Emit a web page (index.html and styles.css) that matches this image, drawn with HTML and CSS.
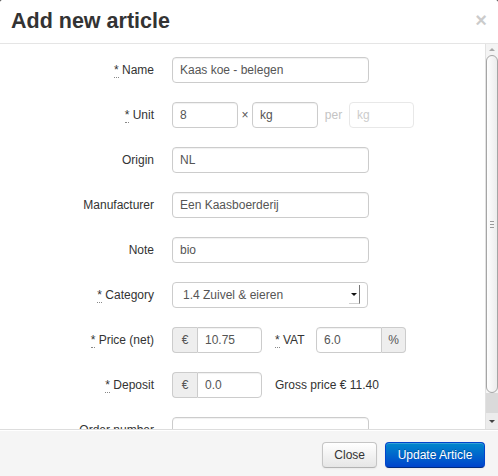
FILE: index.html
```html
<!DOCTYPE html>
<html lang="en">
<head>
<meta charset="utf-8">
<title>Add new article</title>
<link rel="stylesheet" href="styles.css">
</head>
<body>
<div class="modal">
  <div class="modal-header">
    <h3 class="title">Add new article</h3>
    <span class="close">×</span>
  </div>
  <div class="modal-body">
    <div class="form">
      <div class="row">
        <label class="lbl"><abbr title="required">*</abbr> Name</label>
        <div class="controls"><input class="input w-full" value="Kaas koe - belegen"></div>
      </div>
      <div class="row">
        <label class="lbl"><abbr title="required">*</abbr> Unit</label>
        <div class="controls">
          <input class="input w-66" value="8">
          <span class="times">×</span>
          <input class="input w-66" value="kg">
          <span class="per">per</span>
          <input class="input w-65 muted" placeholder="kg">
        </div>
      </div>
      <div class="row">
        <label class="lbl">Origin</label>
        <div class="controls"><input class="input w-full" value="NL"></div>
      </div>
      <div class="row">
        <label class="lbl">Manufacturer</label>
        <div class="controls"><input class="input w-full" value="Een Kaasboerderij"></div>
      </div>
      <div class="row">
        <label class="lbl">Note</label>
        <div class="controls"><input class="input w-full" value="bio"></div>
      </div>
      <div class="row">
        <label class="lbl"><abbr title="required">*</abbr> Category</label>
        <div class="controls">
          <div class="select"><span class="select-text">1.4 Zuivel &amp; eieren</span><span class="select-arrow"><span class="tri"></span></span></div>
        </div>
      </div>
      <div class="row">
        <label class="lbl"><abbr title="required">*</abbr> Price (net)</label>
        <div class="controls">
          <span class="addon addon-left">€</span><input class="input w-65 right-part" value="10.75">
          <label class="inline-lbl"><abbr title="required">*</abbr> VAT</label>
          <input class="input w-66 left-part" value="6.0"><span class="addon addon-right">%</span>
        </div>
      </div>
      <div class="row">
        <label class="lbl"><abbr title="required">*</abbr> Deposit</label>
        <div class="controls">
          <span class="addon addon-left">€</span><input class="input w-65 right-part" value="0.0">
          <span class="gross">Gross price € 11.40</span>
        </div>
      </div>
      <div class="row">
        <label class="lbl">Order number</label>
        <div class="controls"><input class="input w-full" value=""></div>
      </div>
    </div>
    <div class="scrollbar">
      <div class="sb-up"><span class="arr-up"></span></div>
      <div class="sb-thumb"><span class="grip"></span><span class="grip"></span><span class="grip"></span></div>
      <div class="sb-track"></div>
      <div class="sb-down"><span class="arr-down"></span></div>
    </div>
  </div>
  <div class="modal-footer">
    <button class="btn">Close</button>
    <button class="btn btn-primary">Update Article</button>
  </div>
</div>
</body>
</html>
```

FILE: styles.css
```css
html, body {
  margin: 0;
  padding: 0;
  background: #222;
}
body {
  font-family: "Liberation Sans", Arial, sans-serif;
  font-size: 12px;
  color: #333;
}
.modal {
  width: 498px;
  height: 476px;
  background: #fff;
  border-radius: 2px 2px 0 0;
  display: flex;
  flex-direction: column;
  overflow: hidden;
}
.modal-header {
  height: 43px;
  border-bottom: 1px solid #e5e5e5;
  display: flex;
  align-items: center;
  justify-content: space-between;
  padding: 0 11px 0 11px;
  flex: none;
}
.title {
  margin: 0;
  font-size: 21.5px;
  font-weight: bold;
  color: #333;
  line-height: normal;
}
.close {
  font-size: 20px;
  font-weight: bold;
  color: #000;
  opacity: 0.2;
  line-height: 1;
  margin-bottom: 4px;
}
.modal-body {
  height: 385px;
  display: flex;
  flex: none;
}
.form {
  flex: 1;
  overflow: hidden;
  padding: 13px 0 0 15px;
}
.row {
  display: grid;
  grid-template-columns: 139px 1fr;
  column-gap: 18px;
  align-items: center;
  height: 26px;
  margin-bottom: 19px;
}
.lbl {
  text-align: right;
  color: #333;
  white-space: nowrap;
}
abbr {
  text-decoration: none;
  border-bottom: 1px dotted #888;
}
.controls {
  display: flex;
  align-items: center;
  height: 26px;
}
.input {
  box-sizing: border-box;
  height: 26px;
  border: 1px solid #ccc;
  border-radius: 4px;
  padding: 0 7px;
  font-family: "Liberation Sans", Arial, sans-serif;
  font-size: 12px;
  color: #555;
  background: #fff;
  margin: 0;
  box-shadow: inset 0 1px 1px rgba(0,0,0,0.06);
  outline: none;
}
.w-full { width: 197px; }
.w-66 { width: 66px; }
.w-65 { width: 65px; }
.muted {
  border-color: #e8e8e8;
  box-shadow: none;
}
.muted::placeholder { color: #ccc; }
.times {
  width: 14px;
  text-align: center;
  color: #555;
}
.per {
  width: 31px;
  text-align: center;
  color: #c4c4c4;
}
.select {
  box-sizing: border-box;
  width: 196px;
  height: 26px;
  border: 1px solid #ccc;
  border-radius: 4px;
  display: flex;
  align-items: flex-start;
  justify-content: space-between;
  padding: 0 7px 0 10px;
  color: #555;
  background: #fff;
}
.select-text {
  line-height: 24px;
}
.select-arrow {
  box-sizing: border-box;
  width: 11px;
  height: 19px;
  margin-top: 2px;
  border-right: 1px solid #777;
  border-bottom: 1px solid #d0d0d0;
  display: flex;
  align-items: center;
  justify-content: center;
}
.tri {
  width: 0;
  height: 0;
  border-left: 3px solid transparent;
  border-right: 3px solid transparent;
  border-top: 3px solid #111;
  margin-top: 1px;
}
.addon {
  box-sizing: border-box;
  height: 26px;
  width: 25px;
  background: #eee;
  border: 1px solid #ccc;
  color: #555;
  display: flex;
  align-items: center;
  justify-content: center;
}
.addon-left {
  border-radius: 4px 0 0 4px;
  border-right: none;
}
.addon-right {
  width: 24px;
  border-radius: 0 4px 4px 0;
  border-left: none;
}
.right-part { border-radius: 0 4px 4px 0; }
.left-part { border-radius: 4px 0 0 4px; }
.inline-lbl {
  width: 41px;
  margin-left: 13px;
  box-sizing: border-box;
  color: #333;
}
.gross {
  margin-left: 13px;
  color: #333;
}
.scrollbar {
  width: 13px;
  flex: none;
  display: flex;
  flex-direction: column;
  background: #f4f4f4;
  border-left: 1px solid #e2e2e2;
  box-sizing: border-box;
}
.sb-up {
  height: 11px;
  display: flex;
  align-items: center;
  justify-content: center;
  flex: none;
}
.arr-up {
  width: 0;
  height: 0;
  border-left: 3px solid transparent;
  border-right: 3px solid transparent;
  border-bottom: 3px solid #aaa;
}
.sb-thumb {
  height: 338px;
  flex: none;
  box-sizing: border-box;
  border: 1px solid #a5a5a5;
  border-radius: 6px;
  background: linear-gradient(to right, #fefefe, #ececec);
  display: flex;
  flex-direction: column;
  align-items: center;
  justify-content: center;
  gap: 2px;
}
.grip {
  width: 4px;
  height: 1px;
  background: #9a9a9a;
}
.sb-track {
  height: 20px;
  flex: none;
  background: #dadada;
}
.sb-down {
  flex: 1;
  display: flex;
  align-items: center;
  justify-content: center;
  background: #ececec;
}
.arr-down {
  width: 0;
  height: 0;
  border-left: 3px solid transparent;
  border-right: 3px solid transparent;
  border-top: 3px solid #444;
}
.modal-footer {
  flex: 1;
  border-top: 1px solid #ddd;
  background: #f5f5f5;
  box-shadow: inset 0 1px 0 #fff;
  display: flex;
  justify-content: flex-end;
  align-items: flex-start;
  gap: 8px;
  padding: 12px 13px 0 0;
}
.btn {
  box-sizing: border-box;
  height: 26px;
  padding: 0 11px;
  font-family: "Liberation Sans", Arial, sans-serif;
  font-size: 12px;
  color: #333;
  border: 1px solid #c5c5c5;
  border-bottom-color: #b3b3b3;
  border-radius: 4px;
  background: linear-gradient(to bottom, #ffffff, #e6e6e6);
  box-shadow: inset 0 1px 0 rgba(255,255,255,0.2), 0 1px 2px rgba(0,0,0,0.05);
  margin: 0;
}
.btn-primary {
  color: #fff;
  width: 100px;
  padding: 0;
  background: linear-gradient(to bottom, #0088cc, #0044cc);
  border-color: #0044cc #0044cc #002a80;
  text-shadow: 0 -1px 0 rgba(0,0,0,0.25);
}
```
